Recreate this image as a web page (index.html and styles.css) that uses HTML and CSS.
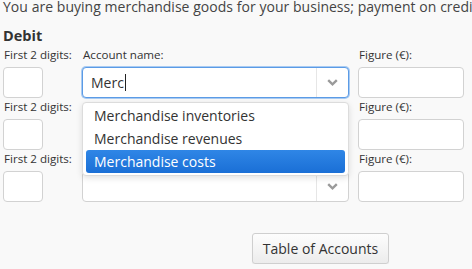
FILE: index.html
```html
<!doctype html>
<html lang="en">
<head>
	<meta charset="UTF-8">
	<title>Journal entry</title>
	<link rel="stylesheet" href="styles.css">
</head>
<body>
<div class="page">
	<p class="task">You are buying merchandise goods for your business; payment on credit.</p>
	<div class="side-title">Debit</div>

	<div class="entry">
		<div class="field field-digits">
			<label>First 2 digits:</label>
			<div class="box"></div>
		</div>
		<div class="field field-account open">
			<label>Account name:</label>
			<div class="select focused">
				<span class="select-value">Merc<span class="caret"></span></span>
				<span class="select-arrow">
					<svg width="11" height="7" viewBox="0 0 11 7"><polyline points="1.2,1.2 5.5,5.3 9.8,1.2" fill="none" stroke="#9a9a9a" stroke-width="2.4"/></svg>
				</span>
			</div>
			<ul class="options">
				<li>Merchandise inventories</li>
				<li>Merchandise revenues</li>
				<li class="active">Merchandise costs</li>
			</ul>
		</div>
		<div class="field field-figure">
			<label>Figure (€):</label>
			<div class="box"></div>
		</div>
	</div>

	<div class="entry">
		<div class="field field-digits">
			<label>First 2 digits:</label>
			<div class="box"></div>
		</div>
		<div class="field field-account">
			<label>Account name:</label>
			<div class="select">
				<span class="select-value"></span>
				<span class="select-arrow">
					<svg width="11" height="7" viewBox="0 0 11 7"><polyline points="1.2,1.2 5.5,5.3 9.8,1.2" fill="none" stroke="#9a9a9a" stroke-width="2.4"/></svg>
				</span>
			</div>
		</div>
		<div class="field field-figure">
			<label>Figure (€):</label>
			<div class="box"></div>
		</div>
	</div>

	<div class="entry">
		<div class="field field-digits">
			<label>First 2 digits:</label>
			<div class="box"></div>
		</div>
		<div class="field field-account">
			<label>Account name:</label>
			<div class="select">
				<span class="select-value"></span>
				<span class="select-arrow">
					<svg width="11" height="7" viewBox="0 0 11 7"><polyline points="1.2,1.2 5.5,5.3 9.8,1.2" fill="none" stroke="#9a9a9a" stroke-width="2.4"/></svg>
				</span>
			</div>
		</div>
		<div class="field field-figure">
			<label>Figure (€):</label>
			<div class="box"></div>
		</div>
	</div>

	<div class="actions">
		<button class="btn">Table of Accounts</button>
	</div>
</div>
</body>
</html>
```

FILE: styles.css
```css
*{
	box-sizing:border-box;
}
body{
	margin:0;
	background-color:#f9f9f9;
	font-family:"Open Sans", "Liberation Sans", sans-serif;
	color:#333;
	overflow:hidden;
}
.page{
	padding:0 3px;
}
.task{
	margin:-3px 0 0;
	font-size:14px;
	word-spacing:0.2px;
	line-height:19px;
	color:#444;
	white-space:nowrap;
}
.side-title{
	margin-top:10px;
	font-size:14.5px;
	font-weight:bold;
	line-height:20px;
}

/*entry rows*/
.entry{
	display:flex;
	align-items:flex-end;
}
.field{
	display:flex;
	flex-direction:column;
	gap:4px;
}
.field label{
	font-size:11.6px;
	line-height:17px;
	padding-left:1px;
	white-space:nowrap;
}
.field-digits{
	width:40px;
}
.field-account{
	width:267px;
	margin-left:39px;
	position:relative;
}
.field-figure{
	width:106px;
	margin-left:9px;
}
.box{
	height:31px;
	background-color:#fff;
	border:1px solid #d2d2d2;
	border-radius:4px;
}

/*select*/
.select{
	height:31px;
	display:flex;
	background-color:#fff;
	border:1px solid #d2d2d2;
	border-radius:4px;
}
.select.focused{
	border-color:#5b9be6;
	box-shadow:0 0 0 1px #a9cbf2;
}
.select-value{
	flex:1;
	display:flex;
	align-items:center;
	padding-left:8px;
	font-size:14px;
	color:#333;
}
.caret{
	display:inline-block;
	width:1px;
	height:17px;
	margin-left:1px;
	background-color:#222;
}
.select-arrow{
	width:32px;
	display:flex;
	align-items:center;
	justify-content:center;
	border-left:1px solid #e6e6e6;
}

/*dropdown*/
.options{
	position:absolute;
	left:0;
	top:calc(100% + 4px);
	width:267px;
	margin:0;
	padding:1px 3px 2px;
	list-style:none;
	background-color:#fff;
	border:1px solid #dcdcdc;
	border-radius:4px;
	box-shadow:0 2px 6px rgba(0,0,0,0.12);
	z-index:2;
}
.options li{
	height:23px;
	line-height:23px;
	padding-left:8px;
	font-size:14px;
	color:#333;
	border-radius:3px;
}
.options li.active{
	color:#fff;
	background:linear-gradient(#2f86e6, #1a6fd6);
}

/*button*/
.actions{
	margin-top:31px;
	padding-left:249px;
}
.btn{
	width:137px;
	height:31px;
	padding:0;
	font-family:inherit;
	font-size:14px;
	color:#333;
	background:linear-gradient(#fdfdfd, #ececec);
	border:1px solid #cfcfcf;
	border-radius:3px;
	box-shadow:0 1px 1px rgba(0,0,0,0.06);
}
```
